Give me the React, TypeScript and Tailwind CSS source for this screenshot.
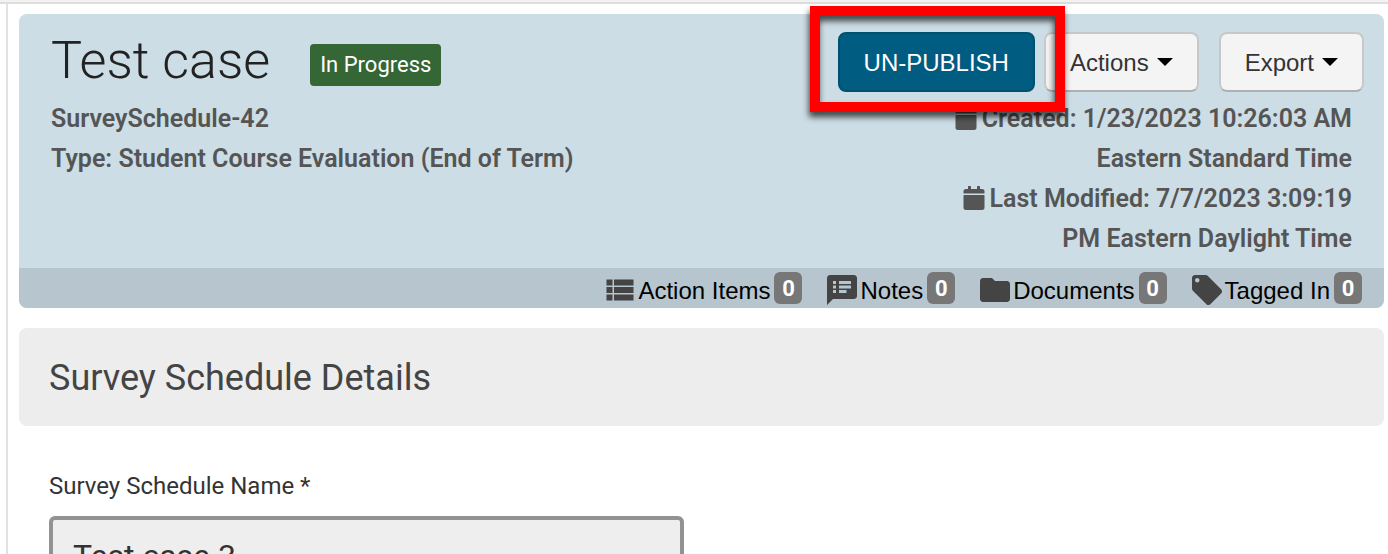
import type { ReactNode } from "react";
import { FaCalendar } from "react-icons/fa";
import { MdFolder, MdLocalOffer, MdSpeakerNotes, MdViewList } from "react-icons/md";

const tabs = [
  { label: "Action Items", count: 0, icon: MdViewList },
  { label: "Notes", count: 0, icon: MdSpeakerNotes },
  { label: "Documents", count: 0, icon: MdFolder },
  { label: "Tagged In", count: 0, icon: MdLocalOffer },
];

const MenuButton = ({ children }: { children: ReactNode }) => (
  <button
    type="button"
    className="flex h-[60px] items-center gap-2 rounded-lg border-2 border-[#c8c8c8] border-b-[#b0b0b0] bg-[#f4f4f4] px-6 font-['Liberation_Sans',sans-serif] text-2xl text-[#333]"
  >
    <span className="pt-[2px]">{children}</span>
    <svg className="h-2 w-4" viewBox="0 0 16 8" aria-hidden="true">
      <path d="M0 0h16L8 8z" fill="#000" />
    </svg>
  </button>
);

const RecordHeader = () => {
  return (
    <header className="rounded-lg bg-[#ccdde5]">
      <div className="flex justify-between pt-[18px] pr-5 pb-[9px] pl-8">
        {/* Title and type */}
        <div>
          <div className="flex h-[67px] items-start gap-10">
            <h1 className="text-[52px] leading-[58px] font-light text-[#222]">Test case</h1>
            <span className="mt-3 rounded bg-[#356635] px-[10px] text-[22px] leading-[42px] text-white">
              In Progress
            </span>
          </div>
          <div className="text-[25px] leading-10 font-semibold text-[#555]">
            <p>SurveySchedule-42</p>
            <p>Type: Student Course Evaluation (End of Term)</p>
          </div>
        </div>

        {/* Buttons and dates */}
        <div className="flex flex-col items-end">
          <div className="flex h-[67px] items-start">
            <div className="relative z-10 mr-[9px]">
              <button
                type="button"
                className="h-[60px] rounded-lg border-2 border-[#00506f] bg-[#005c80] px-6 pt-[2px] font-['Liberation_Sans',sans-serif] text-2xl text-white"
              >
                UN-PUBLISH
              </button>
              <div className="pointer-events-none absolute -top-[26px] -right-[30px] -bottom-5 -left-7 border-10 border-[#f00] drop-shadow-[-1px_5px_3px_rgba(0,0,0,0.7)]" />
            </div>
            <div className="flex gap-5">
              <MenuButton>Actions</MenuButton>
              <MenuButton>Export</MenuButton>
            </div>
          </div>
          <div className="w-[424px] pr-3 text-right text-[25px] leading-10 font-semibold text-[#555]">
            <p>
              <FaCalendar className="mr-1 inline size-6 align-[-3px]" />
              Created: 1/23/2023 10:26:03 AM Eastern Standard Time
            </p>
            <p>
              <FaCalendar className="mr-1 inline size-6 align-[-3px]" />
              Last Modified: 7/7/2023 3:09:19 PM Eastern Daylight Time
            </p>
          </div>
        </div>
      </div>

      {/* Related items */}
      <nav className="flex h-10 items-center justify-end gap-[22px] rounded-b-lg bg-[#b7c5ce] pr-[22px]">
        {tabs.map(({ label, count, icon: Icon }) => (
          <a key={label} href="#" className="flex items-center font-['Liberation_Sans',sans-serif] text-2xl text-black">
            <span className="flex items-center pt-1">
              <Icon className="size-9 text-[#444]" />
              <span className="pt-[2px]">{label}</span>
            </span>
            <span className="ml-1 w-7 rounded-md bg-[#777] pt-px text-center font-['Roboto',sans-serif] text-[22px] leading-[31px] font-bold text-white">
              {count}
            </span>
          </a>
        ))}
      </nav>
    </header>
  );
};

const App = () => {
  return (
    <div className="flex h-screen flex-col overflow-hidden bg-white font-['Roboto',sans-serif]">
      <div className="h-1 shrink-0 border-b-2 border-[#ddd] bg-[#f2f2f2]" />
      <main className="ml-[6px] grow border-l-2 border-[#e2e2e2] pt-[10px] pr-1 pl-[11px]">
        <RecordHeader />

        <section className="mt-5">
          <h2 className="rounded-lg bg-[#ededed] pt-[29px] pb-[27px] pl-[30px] text-4xl leading-[42px] text-[#444]">
            Survey Schedule Details
          </h2>
          <div className="px-[30px] pt-10">
            <label htmlFor="schedule-name" className="block text-2xl leading-10 text-[#333]">
              Survey Schedule Name *
            </label>
            <input
              id="schedule-name"
              type="text"
              defaultValue="Test case 3"
              className="mt-[10px] h-20 w-full max-w-[635px] rounded-md border-4 border-[#929292] bg-[#eee] px-5 text-[32px] text-[#333]"
            />
          </div>
        </section>
      </main>
    </div>
  );
};

export default App;
